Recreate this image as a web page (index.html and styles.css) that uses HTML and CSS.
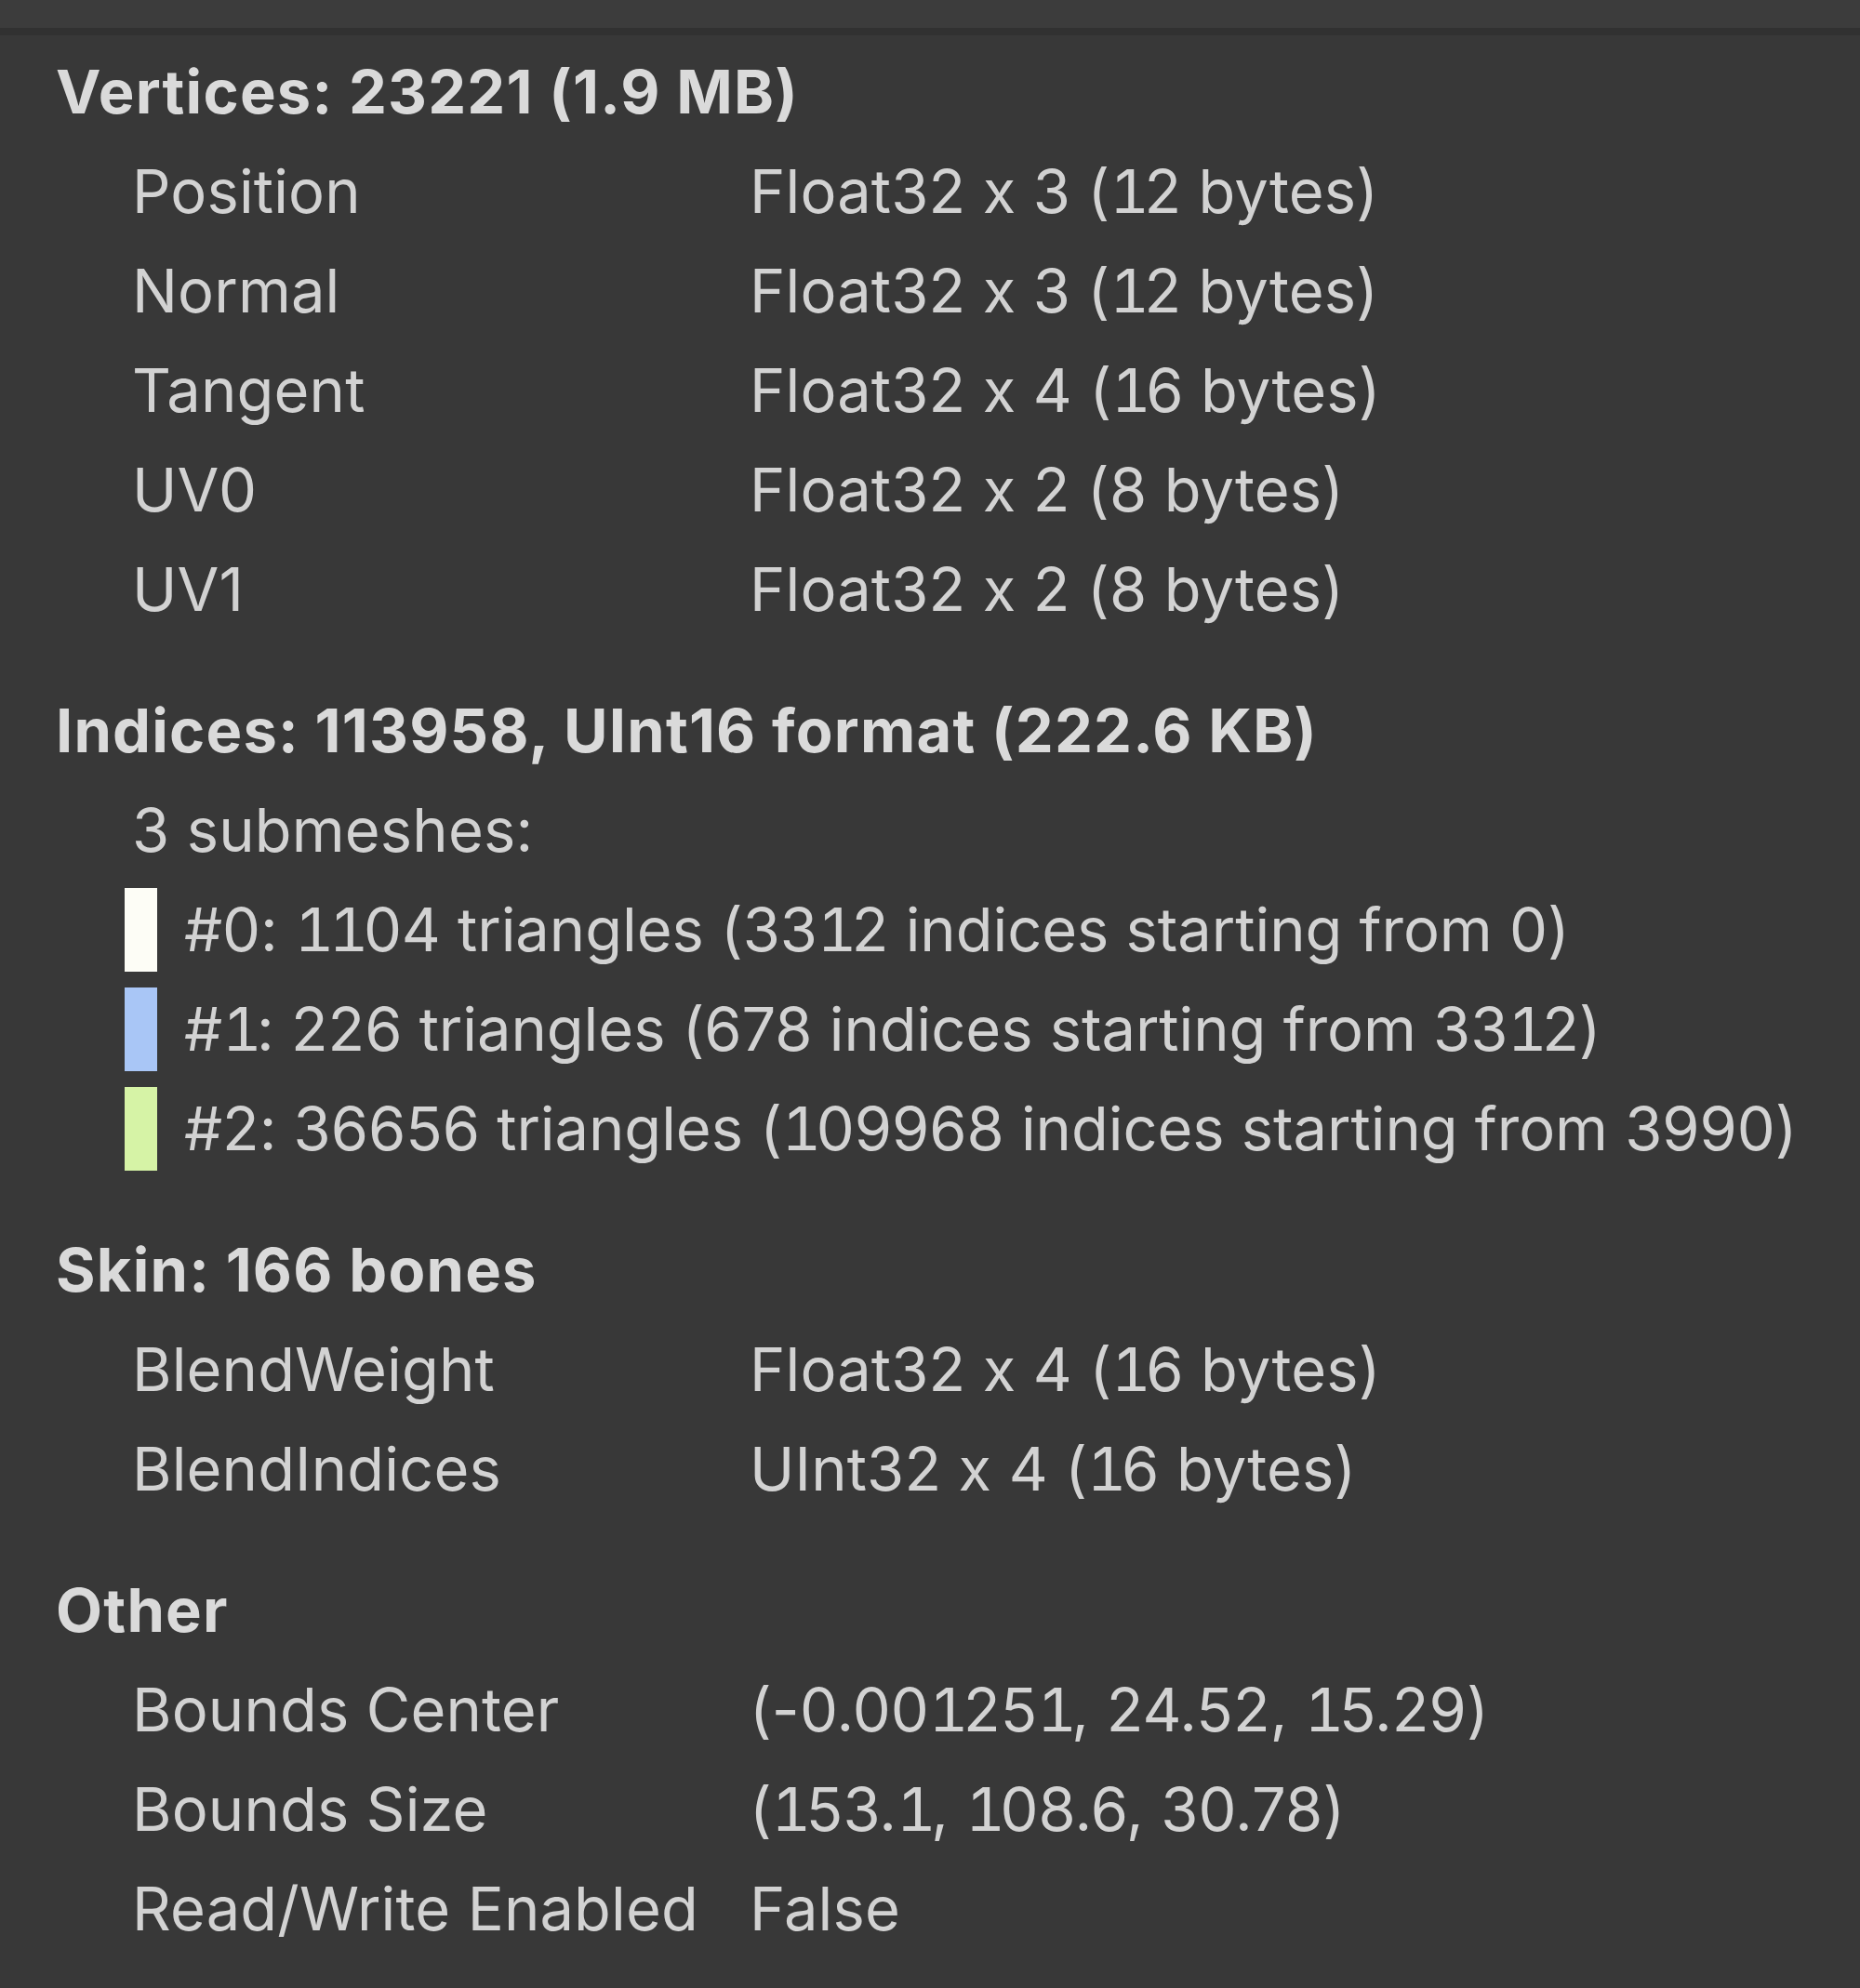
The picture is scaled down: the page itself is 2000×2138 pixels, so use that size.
FILE: index.html
```html
<!DOCTYPE html>
<html>
<head>
<meta charset="utf-8">
<link rel="stylesheet" href="styles.css">
</head>
<body>
<div class="topbar"></div>
<div class="content">
  <section class="section">
    <div class="heading">Vertices: 23221 (1.9 MB)</div>
    <div class="row"><span class="label">Position</span><span class="value">Float32 x 3 (<i class="n1">1</i>2 bytes)</span></div>
    <div class="row"><span class="label">Normal</span><span class="value">Float32 x 3 (<i class="n1">1</i>2 bytes)</span></div>
    <div class="row"><span class="label">Tangent</span><span class="value">Float32 x 4 (<i class="n1">1</i>6 bytes)</span></div>
    <div class="row"><span class="label">UV0</span><span class="value">Float32 x 2 (8 bytes)</span></div>
    <div class="row"><span class="label">UV1</span><span class="value">Float32 x 2 (8 bytes)</span></div>
  </section>
  <section class="section">
    <div class="heading">Indices: 113958, UInt16 format (222.6 KB)</div>
    <div class="row"><span class="label">3 submeshes:</span></div>
    <div class="row sub"><span class="swatch sw0"></span><span class="subtext">#0: <i class="n1">1</i><i class="n1">1</i>04 triangles (33<i class="n1">1</i>2 indices starting from 0)</span></div>
    <div class="row sub"><span class="swatch sw1"></span><span class="subtext">#<i class="n1">1</i>: 226 triangles (678 indices starting from 33<i class="n1">1</i>2)</span></div>
    <div class="row sub"><span class="swatch sw2"></span><span class="subtext">#2: 36656 triangles (<i class="n1">1</i>09968 indices starting from 3990)</span></div>
  </section>
  <section class="section">
    <div class="heading">Skin: 166 bones</div>
    <div class="row"><span class="label">BlendWeight</span><span class="value">Float32 x 4 (<i class="n1">1</i>6 bytes)</span></div>
    <div class="row"><span class="label">BlendIndices</span><span class="value">UInt32 x 4 (<i class="n1">1</i>6 bytes)</span></div>
  </section>
  <section class="section">
    <div class="heading">Other</div>
    <div class="row"><span class="label">Bounds Center</span><span class="value">(-0.00<i class="n1">1</i>25<i class="n1">1</i>, 24.52, <i class="n1">1</i>5.29)</span></div>
    <div class="row"><span class="label">Bounds Size</span><span class="value">(<i class="n1">1</i>53.<i class="n1">1</i>, <i class="n1">1</i>08.6, 30.78)</span></div>
    <div class="row"><span class="label">Read/Write Enabled</span><span class="value">False</span></div>
  </section>
</div>
</body>
</html>
```
FILE: styles.css
```css
html, body {
  margin: 0;
  padding: 0;
}
body {
  background: #383838;
  width: 2000px;
  height: 2138px;
  overflow: hidden;
  font-family: Inter, "Noto Sans", sans-serif;
  font-feature-settings: "calt" 0;
  color: #d2d2d2;
}
.topbar {
  height: 30px;
  background: #3c3c3c;
  border-bottom: 8px solid #313131;
}
.content {
  padding: 7px 0 0 60px;
  display: flex;
  flex-direction: column;
  gap: 45px;
}
.section {
  display: flex;
  flex-direction: column;
}
.heading, .row {
  height: 107px;
  line-height: 107px;
  font-size: 65px;
  letter-spacing: 0.15px;
  white-space: nowrap;
}
.heading {
  font-weight: 700;
  color: #dadada;
  letter-spacing: 1.2px;
}
.row {
  display: flex;
  align-items: center;
  padding-left: 82px;
}
.label {
  width: 664px;
  flex: none;
}
.n1 {
  font-style: normal;
  font-feature-settings: "calt" 0, "tnum" 1;
  letter-spacing: -5.2px;
}
.row.sub {
  padding-left: 74px;
}
.subtext {
  letter-spacing: -0.05px;
}
.swatch {
  width: 35px;
  height: 90px;
  flex: none;
  margin-right: 29px;
}
.sw0 { background: #fdfdf6; }
.sw1 { background: #a9c6f6; }
.sw2 { background: #d6f3a6; }
```
